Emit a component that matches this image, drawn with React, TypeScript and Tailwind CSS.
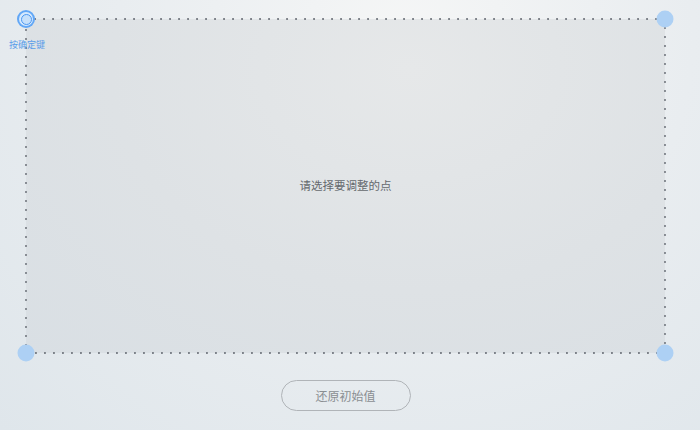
import React from 'react';

const font = { fontFamily: '"Noto Sans CJK SC", "Noto Sans", sans-serif' };

const Handle = ({ active, className }: { active?: boolean; className: string }) =>
  active ? (
    <div className={`absolute w-[18px] h-[18px] -translate-x-1/2 -translate-y-1/2 rounded-full bg-[#62a7f6] flex items-center justify-center ${className}`}>
      <div className="w-[14px] h-[14px] rounded-full bg-[#d6e9fd] flex items-center justify-center">
        <div className="w-[11px] h-[11px] rounded-full border-[1.5px] border-[#4b98f3] bg-[#c6e0fb]" />
      </div>
    </div>
  ) : (
    <div className={`absolute w-[17px] h-[17px] -translate-x-1/2 -translate-y-1/2 rounded-full bg-[#add0f4] ${className}`} />
  );

const App = () => {
  return (
    <div
      className="w-[700px] h-[430px] overflow-hidden bg-[radial-gradient(ellipse_at_58%_8%,#f5f6f6_0%,#e9edf0_50%,#dfe6eb_100%)]"
      style={font}
    >
      <div className="relative w-[639px] h-[334px] ml-[26px] mt-[19px] bg-[radial-gradient(ellipse_at_60%_15%,#e6e8e9_0%,#dee2e5_55%,#d9dfe4_100%)] flex items-center justify-center">
        <svg className="absolute inset-0 overflow-visible" width="639" height="334">
          <rect
            x="0"
            y="0"
            width="639"
            height="334"
            fill="none"
            stroke="#6b7078"
            strokeWidth="2"
            strokeLinecap="round"
            strokeDasharray="0.1 8.9"
          />
        </svg>
        <span className="text-[11.5px] text-[#65696e]">请选择要调整的点</span>
        <Handle active className="left-0 top-0" />
        <Handle className="left-full top-0" />
        <Handle className="left-0 top-full" />
        <Handle className="left-full top-full" />
        <span className="absolute left-[-17px] top-[21px] text-[9px] leading-none text-[#5a9de9]">按确定键</span>
      </div>
      <div className="w-[639px] ml-[26px] mt-[27px] flex justify-center">
        <button className="w-[130px] h-[31px] rounded-full border border-[#b0b4b8] text-[12px] text-[#8a8e92] bg-transparent">
          还原初始值
        </button>
      </div>
    </div>
  );
};

export default App;
